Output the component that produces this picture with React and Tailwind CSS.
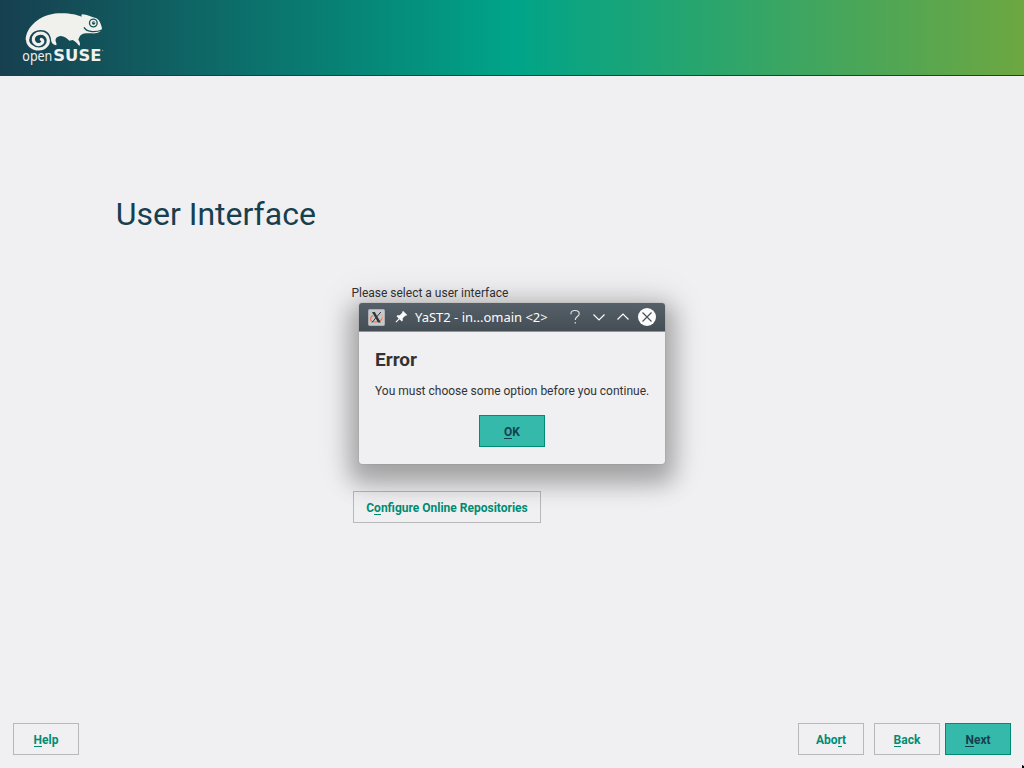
function Logo() {
  return (
    <svg className="ml-5 mt-2.5 h-14 w-[86px]" viewBox="30 30 258 168">
      <path
        fill="#f0f0ec"
        d="M47 120C48 82 88 43 145 40C176 38 200 44 215 50C214 46 214 44 217 43C231 43 243 51 257 54C267 57 272 69 276 84C276 96 258 102 245 100C232 99 220 99 214 104C208 108 207 114 205 119C210 127 212 132 208 138C203 132 197 125 188 120L178 122C171 115 163 108 152 108C140 109 135 117 137 123C138 128 141 132 139 136C128 135 123 126 123 118C121 99 108 90 92 90C74 90 60 101 58 118Z"
      />
      <path
        fill="none"
        stroke="#f0f0ec"
        strokeWidth="9.500"
        strokeLinecap="round"
        d="M53 114C50 132 66 147 87 147C104 147 116 134 115 120C114 107 103 99.500 92 99.500C78 99.500 69 109 70 120C71 131 82 136 91 133C99 130 101 121 94 118"
      />
      <circle cx="250" cy="69" r="11.500" fill="#f0f0ec" stroke="#15515a" strokeWidth="4" />
      <circle cx="251" cy="69" r="5" fill="#15515a" />
      <path d="M250 67h5" stroke="#f0f0ec" strokeWidth="2" />
      <path d="M222 82C229 95 252 99 276 90" fill="none" stroke="#15515a" strokeWidth="4" />
      <text x="37" y="184" textLength="90" lengthAdjust="spacingAndGlyphs" fill="#f0f0ec" fontSize="44" fontFamily="'Noto Sans', sans-serif">open</text>
      <text x="130" y="184" textLength="144" lengthAdjust="spacingAndGlyphs" fill="#f0f0ec" fontSize="46" fontWeight="700" fontFamily="'DejaVu Sans', sans-serif">SUSE</text>
      <circle cx="278" cy="151" r="2" fill="#8eaaa8" />
    </svg>
  );
}

function Mnemonic({ before = "", letter, after = "" }) {
  return (
    <span className="whitespace-pre">
      {before}
      <span className="inline-block h-[14px] border-b border-current leading-[14px]">{letter}</span>
      {after}
    </span>
  );
}

function Button({ primary, wide, className = "", ...label }) {
  return (
    <button
      className={`flex h-8 items-center justify-center border pt-[2px] text-[12px] leading-[14px] font-bold ${wide ? "w-[188px]" : "w-[66px]"} ${primary ? "border-[#008c72] bg-[#35b9ab] text-[#173f4f]" : "border-[#b8b8ba] text-[#008c72]"} ${className}`}
    >
      <Mnemonic {...label} />
    </button>
  );
}

function XIcon() {
  return (
    <svg className="size-[17px]" viewBox="0 0 17 17">
      <rect x=".5" y=".5" width="16" height="16" rx="1" fill="#c5c9cb" stroke="#aab0b3" />
      <path d="M5 6.500C1.500 8.500 1.500 12.500 6 13c4 .3 8-1.500 8.500-4.500" fill="none" stroke="#ee7040" strokeWidth="1.100" />
      <path d="M12.500 5c2 .7 2.500 3 1.500 5" fill="none" stroke="#eda48a" strokeWidth=".8" />
      <path d="M12.800 3L4 13.500" stroke="#30363a" strokeWidth="1" />
      <path d="M4 3h2.800l6 10.500H10z" fill="#30363a" />
    </svg>
  );
}

function TitleBar() {
  return (
    <div className="flex h-7 shrink-0 items-center rounded-t-[3px] bg-linear-to-b from-[#566068] to-[#454e55] pl-[9px] text-[#fcfcfc]">
      <XIcon />
      <svg className="ml-[9px] size-4" viewBox="0 0 16 16" fill="currentColor">
        <path d="M9.200 2L13.200 6l-1 .8-.9-.1L8.700 9.300l.1 2.200-1 1L5.600 10.300 2.300 13.500l-.8-.8L4.700 9.400 2.500 7.200l1-1 2.200.1L8.300 3.700l-.1-.9z" />
      </svg>
      <span className="ml-[5px] w-[148px] font-['Noto_Sans',sans-serif] text-[13px] leading-[18px] tracking-[-0.015px] whitespace-pre">YaST2 - in...omain &lt;2&gt;</span>
      <svg className="h-6 w-24" viewBox="0 0 96 24" fill="none" stroke="currentColor" strokeWidth="1.150">
        <path opacity=".85" d="M8 9.300V8.500C8 6.800 9.400 5.500 12 5.500C14.700 5.500 16.200 6.800 16.200 8.700C16.200 11.700 12.300 11.500 12.300 15M12.300 17v1.600" />
        <path d="M30.500 9.500L36 15l5.500-5.500M54.500 14.500L60 9l5.500 5.500" />
        <circle cx="84" cy="12" r="9" fill="#fcfcfc" stroke="none" />
        <path d="M79.500 7.500l9 9m0-9l-9 9" stroke="#475057" />
      </svg>
    </div>
  );
}

function ErrorDialog() {
  return (
    <section
      role="dialog"
      aria-label="Error"
      className="absolute top-[303px] left-[359px] flex h-[161px] w-[306px] flex-col rounded-[3px] bg-[#f0f0f2] shadow-[0_0_1px_rgba(0,0,0,0.4),0_11px_22px_9px_rgba(0,0,0,0.25),0_5px_38px_7px_rgba(0,0,0,0.13)]"
    >
      <TitleBar />
      <div className="flex flex-1 flex-col border-t border-[#3daee9] px-4 text-[#333333]">
        <h2 className="mt-[17px] text-[19px] leading-[22px] font-bold">Error</h2>
        <p className="mt-[13px] text-[12px] leading-[14px] whitespace-nowrap">You must choose some option before you continue.</p>
        <Button primary letter="O" after="K" className="mt-[17px] self-center" />
      </div>
    </section>
  );
}

export default function App() {
  return (
    <div className="relative flex h-[768px] w-[1024px] flex-col overflow-hidden bg-[#f0f0f2] font-[Roboto,sans-serif]">
      <header className="h-[76px] shrink-0 border-b border-[#173f4f] bg-[linear-gradient(90deg,#173f4f_0%,#00a489_50%,#6da741_100%)]">
        <Logo />
      </header>
      <main className="flex-1">
        <h1 className="mt-[119px] ml-[115.7px] text-[32px] leading-[38px] text-[#173f4f]">User Interface</h1>
        <div className="mt-[53px] ml-[351px] flex flex-col">
          <p className="pl-[0.4px] text-[12px] leading-[14px] text-[#333333]">Please select a user interface</p>
          <Button wide before="C" letter="o" after="nfigure Online Repositories" className="mt-[191px] ml-[2px]" />
        </div>
      </main>
      <footer className="flex h-[45px] shrink-0 px-[13px]">
        <Button letter="H" after="elp" />
        <Button before="Abo" letter="r" after="t" className="ml-auto" />
        <Button letter="B" after="ack" className="ml-[10px]" />
        <Button primary letter="N" after="ext" className="ml-[5px]" />
      </footer>
      <ErrorDialog />
      <svg className="absolute right-0 bottom-0 size-[3px]" viewBox="0 0 3 3">
        <path d="M1 0v3h2V1z" />
      </svg>
    </div>
  );
}
